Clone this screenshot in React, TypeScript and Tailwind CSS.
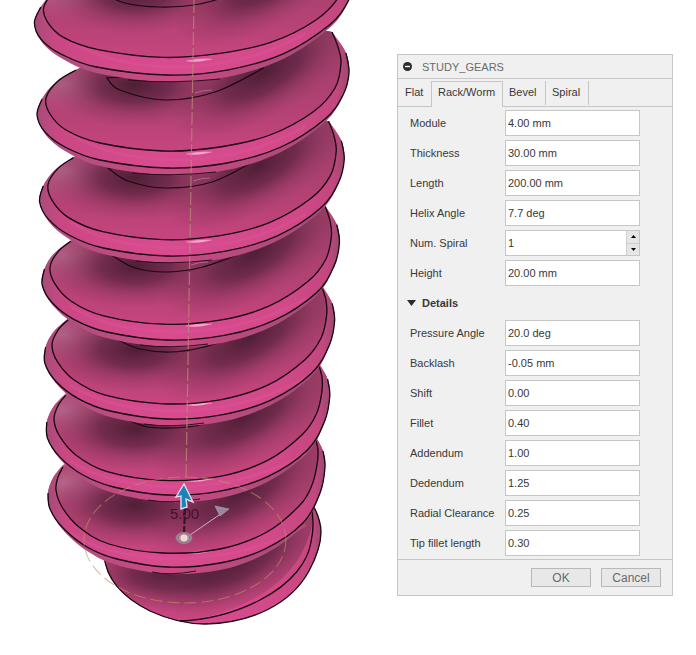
import { useState } from "react";

type Pt = [number, number];

// Outline of the flank crest and of its inner edge, for a far and a near turn of the thread.
const outerFar: Pt[] = [[76, 70], [55, 83], [42, 99], [37, 115], [45, 132], [65, 147], [100, 160], [167, 168], [227, 163], [281, 147], [325, 119], [343, 95], [349, 73], [346, 53], [332, 32]];
const outerNear: Pt[] = [[63, 465], [53, 478], [48, 493], [50, 509], [63, 528], [87, 547], [117, 559], [167, 567], [220, 563], [265, 549], [303, 523], [320, 493], [325, 467], [323, 451], [316, 437]];
const innerFar: Pt[] = [[76, 70], [58, 81], [46, 98], [50, 114], [66, 130], [100, 143], [163, 151], [220, 147], [270, 135], [313, 112], [335, 88], [341, 63], [338, 47], [332, 32]];
const innerNear: Pt[] = [[63, 467], [58, 477], [56, 490], [62, 507], [79, 527], [109, 544], [163, 553], [220, 549], [267, 532], [300, 505], [312, 485], [317, 465], [318, 450], [315, 437]];
const skirtDrop = [0, 0, 0, 0, 2, 4, 6, 7, 7, 5, 3, 1, 0, 0, 0];

const bottoms = [75, 168, 256, 340, 419, 495, 567];
const roots: Pt[][] = [
  [[100, -8], [125, 3], [160, 7], [200, 4], [240, -8]],
  [[107, 78], [120, 90], [165, 100], [215, 92], [264, 68]],
  [[108, 168], [128, 181], [165, 188], [212, 182], [256, 160]],
  [[113, 256], [135, 268], [168, 272], [203, 267], [242, 253]],
  [[118, 340], [140, 349], [170, 352], [200, 348], [232, 338]],
  [[128, 420], [148, 427], [172, 428], [195, 426], [214, 421]],
];

function blend(a: Pt[], b: Pt[], t: number, bottom: number): Pt[] {
  return a.map((p, i) => [
    p[0] + (b[i][0] - p[0]) * t,
    bottom + (p[1] - 168) + (b[i][1] - 567 - (p[1] - 168)) * t,
  ]);
}

function curve(p: Pt[]): string {
  let d = `M${p[0][0].toFixed(1)} ${p[0][1].toFixed(1)}`;
  for (let i = 0; i < p.length - 1; i++) {
    const a = p[Math.max(i - 1, 0)];
    const b = p[i];
    const c = p[i + 1];
    const e = p[Math.min(i + 2, p.length - 1)];
    const v = [b[0] + (c[0] - a[0]) / 6, b[1] + (c[1] - a[1]) / 6, c[0] - (e[0] - b[0]) / 6, c[1] - (e[1] - b[1]) / 6, c[0], c[1]];
    d += "C" + v.map((n) => n.toFixed(1)).join(" ");
  }
  return d;
}

function Turn({ index }: { index: number }) {
  const t = (index - 1) / 5;
  const y = bottoms[index];
  const outer = blend(outerFar, outerNear, t, y);
  const inner = blend(innerFar, innerNear, t, y);
  const skirt = outer.map((p, i): Pt => [p[0], p[1] + skirtDrop[i]]);
  const root = roots[index];
  const right = 345 - t * 24;
  const top = index === 0 ? y - 93 : bottoms[index - 1];
  // The area behind the upper turn is hidden, so the outlines close over it.
  const close = `L260 ${y - 150}L140 ${y - 130}Z`;
  return (
    <g>
      <clipPath id={`face${index}`}>
        <path d={curve(inner) + close} />
      </clipPath>
      <path d={curve(skirt) + close} fill="url(#skirt)" />
      <path d={curve(outer) + close} fill="url(#rim)" />
      <g clipPath={`url(#face${index})`}>
        <rect x="30" y={y - 150} width="330" height="150" fill="url(#face)" />
        <ellipse cx="64" cy={y - 84} rx="60" ry="32" fill="url(#pale)" />
        <ellipse cx="135" cy={top + 10} rx="88" ry="42" fill="url(#shade)" />
        <ellipse cx={right - 82} cy={top - 2} rx="105" ry="44" fill="url(#shade)" transform={`rotate(-30 ${right - 82} ${top - 2})`} />
        {root && <path d={curve(root) + "Z"} fill="url(#root)" stroke="#1c0712" strokeWidth="1.2" />}
        {root && index < 4 && index > 0 && (
          <path d={`M${197 - index * 2} ${root[2][1] - 7}q8 -3 17 -3`} stroke="#c08aa8" strokeOpacity=".6" strokeWidth="1" fill="none" />
        )}
      </g>
      <path d={`M70 ${y - 34}Q110 ${y - 9} 175 ${y - 8}Q250 ${y - 9} 306 ${y - 42}`} fill="none" stroke="#e35598" strokeOpacity=".35" strokeWidth="3" />
      <path d={`M186 ${y - 14}q12 2 26 -2q-12 -1 -26 2Z`} fill="#f7a9cd" stroke="#f08abb" strokeWidth=".4" />
      <path d={curve(inner)} fill="none" stroke="#17050f" strokeWidth="1.3" />
      <path d={curve(outer.slice(2, 14))} fill="none" stroke="#17050f" strokeWidth="1.3" />
      <path d={`M${128 + index * 4} ${y + 5}Q170 ${y + 9} ${220 - index * 4} ${y + 4}`} fill="none" stroke="#2c0c1d" strokeWidth="1" />
    </g>
  );
}

function WormGear() {
  return (
    <svg viewBox="0 0 397 655" className="block h-auto w-full" role="img" aria-label="Worm gear model">
      <defs>
        <linearGradient id="face" x1="0" y1="0" x2="0" y2="1">
          <stop offset="0" stopColor="#9a3d68" />
          <stop offset=".5" stopColor="#ad4170" />
          <stop offset=".75" stopColor="#bc4378" />
          <stop offset=".9" stopColor="#c74680" />
          <stop offset="1" stopColor="#cc4885" />
        </linearGradient>
        <linearGradient id="rim" x1="0" y1="0" x2="1" y2="0">
          <stop offset="0" stopColor="#a64c78" />
          <stop offset=".07" stopColor="#cb4784" />
          <stop offset=".4" stopColor="#d84c8f" />
          <stop offset=".8" stopColor="#d2498a" />
          <stop offset=".96" stopColor="#c4477f" />
          <stop offset="1" stopColor="#9a4a70" />
        </linearGradient>
        <linearGradient id="skirt" x1="0" y1="0" x2="1" y2="0">
          <stop offset="0" stopColor="#a8507c" />
          <stop offset=".4" stopColor="#cb4984" />
          <stop offset="1" stopColor="#a04c74" />
        </linearGradient>
        <linearGradient id="root" x1="0" y1="0" x2="1" y2="0">
          <stop offset="0" stopColor="#743151" />
          <stop offset=".5" stopColor="#933d67" />
          <stop offset="1" stopColor="#6a2c4b" />
        </linearGradient>
        <radialGradient id="shade">
          <stop offset="0" stopColor="#40182c" stopOpacity=".85" />
          <stop offset=".4" stopColor="#4c1e36" stopOpacity=".62" />
          <stop offset=".7" stopColor="#682a47" stopOpacity=".27" />
          <stop offset="1" stopColor="#77304f" stopOpacity="0" />
        </radialGradient>
        <radialGradient id="pale">
          <stop offset="0" stopColor="#bb7697" stopOpacity=".7" />
          <stop offset="1" stopColor="#b84c7c" stopOpacity="0" />
        </radialGradient>
        <clipPath id="end">
          <path d="M104 555C106 582 126 599 150 611C166 618 174 620 184 621C245 613 312 578 314 507L310 480L120 490Z" />
        </clipPath>
      </defs>

      <path d="M104 555C106 582 126 599 150 611C174 622 190 624 205 624C252 623 291 604 309 571C316 558 321 545 321 532C321 522 317 513 314 507L300 480L120 490Z" fill="url(#rim)" />
      <g clipPath="url(#end)">
        <rect x="100" y="475" width="225" height="150" fill="url(#face)" />
        <ellipse cx="170" cy="574" rx="95" ry="38" fill="url(#shade)" />
        <ellipse cx="240" cy="558" rx="100" ry="46" fill="url(#shade)" transform="rotate(-28 240 558)" />
      </g>
      <path d="M180 621C205 620 231 615 260 600C293 583 308 561 311 542C314 528 313 520 312 510" fill="none" stroke="#17050f" strokeWidth="1.3" />
      <path d="M104 555C106 582 126 599 150 611C174 622 190 624 205 624C252 623 291 604 309 571C316 558 321 545 321 532C321 522 317 513 314 507" fill="none" stroke="#17050f" strokeWidth="1.3" />

      {[6, 5, 4, 3, 2, 1, 0].map((i) => (
        <Turn key={i} index={i} />
      ))}

      <path d="M194 0L186 480" stroke="#b98a78" strokeOpacity=".75" strokeWidth="1.2" strokeDasharray="13 3" />
      <ellipse cx="185" cy="540" rx="101" ry="63" fill="none" stroke="#bd9468" strokeOpacity=".6" strokeWidth="1.1" strokeDasharray="12 5" />

      <path d="M185 508L184 534" stroke="#2b171f" strokeWidth="2" strokeDasharray="7 2" />
      <text x="170" y="519" fontSize="15" fill="#471029" fontFamily="Liberation Sans, Arial, sans-serif">5.00</text>
      <path d="M190 535L222 513" stroke="#c8b3c8" strokeWidth="1" />
      <path d="M215 506L229 509L220 516Z" fill="#96889f" stroke="#b9a5b8" strokeWidth=".6" />
      <path d="M184 484L176 497L181 496L181 509L187 507L186 499L193 502Z" fill="#1685b5" stroke="#e2d9ee" strokeWidth="1.4" />
      <ellipse cx="184" cy="538" rx="8" ry="5.5" fill="#a8849c" stroke="#8e8291" strokeWidth="1" />
      <ellipse cx="184" cy="538" rx="5.5" ry="4.2" fill="#c79aa0" stroke="#7f746b" strokeWidth=".8" />
      <circle cx="184" cy="538" r="3.4" fill="#f4d9da" />
    </svg>
  );
}

const tabs = [
  { name: "Flat", style: "w-[34px] pl-[7px]" },
  { name: "Rack/Worm", style: "w-[72px] pl-[6px]" },
  { name: "Bevel", style: "w-[43px] pl-[6px]" },
  { name: "Spiral", style: "w-[43px] pl-[6px]" },
];

const general: [string, string][] = [
  ["Module", "4.00 mm"],
  ["Thickness", "30.00 mm"],
  ["Length", "200.00 mm"],
  ["Helix Angle", "7.7 deg"],
  ["Num. Spiral", "1"],
  ["Height", "20.00 mm"],
];

const details: [string, string][] = [
  ["Pressure Angle", "20.0 deg"],
  ["Backlash", "-0.05 mm"],
  ["Shift", "0.00"],
  ["Fillet", "0.40"],
  ["Addendum", "1.00"],
  ["Dedendum", "1.25"],
  ["Radial Clearance", "0.25"],
  ["Tip fillet length", "0.30"],
];

function Field({ label, initial }: { label: string; initial: string }) {
  const [value, setValue] = useState(initial);
  const id = label.toLowerCase().replace(/[^a-z]+/g, "-");
  const step = (by: number) => setValue(String(Math.max(1, Number(value) + by)));
  return (
    <div className="flex h-[30px] items-center">
      <label htmlFor={id} className="w-[95px] shrink-0 whitespace-nowrap">
        {label}
      </label>
      <div className="flex h-[26px] w-[135px] border border-[#c6c6c6] bg-white">
        <input
          id={id}
          value={value}
          onChange={(e) => setValue(e.target.value)}
          className="min-w-0 flex-1 bg-transparent pl-[2px] outline-none"
        />
        {label === "Num. Spiral" && (
          <div className="flex w-[13px] flex-col divide-y divide-[#cfcfcf] border-l border-[#cfcfcf] bg-[#e6e6e6]">
            <button aria-label="Increase" onClick={() => step(1)} className="flex flex-1 items-center justify-center">
              <svg viewBox="0 0 5 3" className="h-[3px] w-[5px]"><path d="M0 3L2.5 0L5 3Z" /></svg>
            </button>
            <button aria-label="Decrease" onClick={() => step(-1)} className="flex flex-1 items-center justify-center">
              <svg viewBox="0 0 5 3" className="h-[3px] w-[5px]"><path d="M0 0L2.5 3L5 0Z" /></svg>
            </button>
          </div>
        )}
      </div>
    </div>
  );
}

function GearDialog() {
  const [active, setActive] = useState("Rack/Worm");
  const [open, setOpen] = useState(true);
  return (
    <section className="w-[276px] border border-[#c6c6c6] bg-[#f0f0f0]">
      <header className="flex h-6 items-center border-b border-[#c6c6c6] pl-[5px] text-[#6a6a6a]">
        <button aria-label="Collapse" className="mr-[10px]">
          <svg viewBox="0 0 9 9" className="h-[9px] w-[9px]">
            <circle cx="4.5" cy="4.5" r="4.5" fill="#2b2b2b" />
            <path d="M2 4.5H7" stroke="#fff" strokeWidth="1.4" />
          </svg>
        </button>
        <h1>STUDY_GEARS</h1>
      </header>
      <nav role="tablist" className="flex h-7 border-b border-[#c6c6c6] pt-[2px]">
        {tabs.map((tab) => (
          <button
            key={tab.name}
            role="tab"
            aria-selected={active === tab.name}
            onClick={() => setActive(tab.name)}
            className={`${tab.style} text-left ${
              active === tab.name
                ? "-mb-px -ml-px border-x border-t border-[#c6c6c6] bg-[#f0f0f0] pb-[5px]"
                : tab.name === "Flat"
                  ? "mb-px pb-[3px]"
                  : "mb-px border-r border-[#c6c6c6] pb-[3px]"
            }`}
          >
            {tab.name}
          </button>
        ))}
      </nav>
      <div className="pt-px pb-px pl-3">
        {general.map(([label, value]) => (
          <Field key={label} label={label} initial={value} />
        ))}
        <button
          aria-expanded={open}
          onClick={() => setOpen(!open)}
          className="-ml-[3px] flex h-[30px] items-center gap-[6px] font-bold"
        >
          <svg viewBox="0 0 9 6" className="h-[6px] w-[9px]"><path d="M0 0H9L4.5 6Z" fill="#2b2b2b" /></svg>
          Details
        </button>
        {open && details.map(([label, value]) => <Field key={label} label={label} initial={value} />)}
      </div>
      <footer className="flex h-9 items-center justify-end gap-[10px] border-t border-[#c6c6c6] pr-[11px] text-xs text-[#6a6a6a]">
        <button className="h-[19px] w-[60px] border border-[#b8b8b8] bg-[#e8e8e8]">OK</button>
        <button className="h-[19px] w-[60px] border border-[#b8b8b8] bg-[#e8e8e8]">Cancel</button>
      </footer>
    </section>
  );
}

export default function App() {
  return (
    <main className="flex min-h-screen items-start bg-white pr-[23px] font-['Liberation_Sans',Arial,sans-serif] text-[11px] leading-4 text-[#383838]">
      <div className="min-w-0 flex-1">
        <WormGear />
      </div>
      <div className="shrink-0 pt-[54px]">
        <GearDialog />
      </div>
    </main>
  );
}
